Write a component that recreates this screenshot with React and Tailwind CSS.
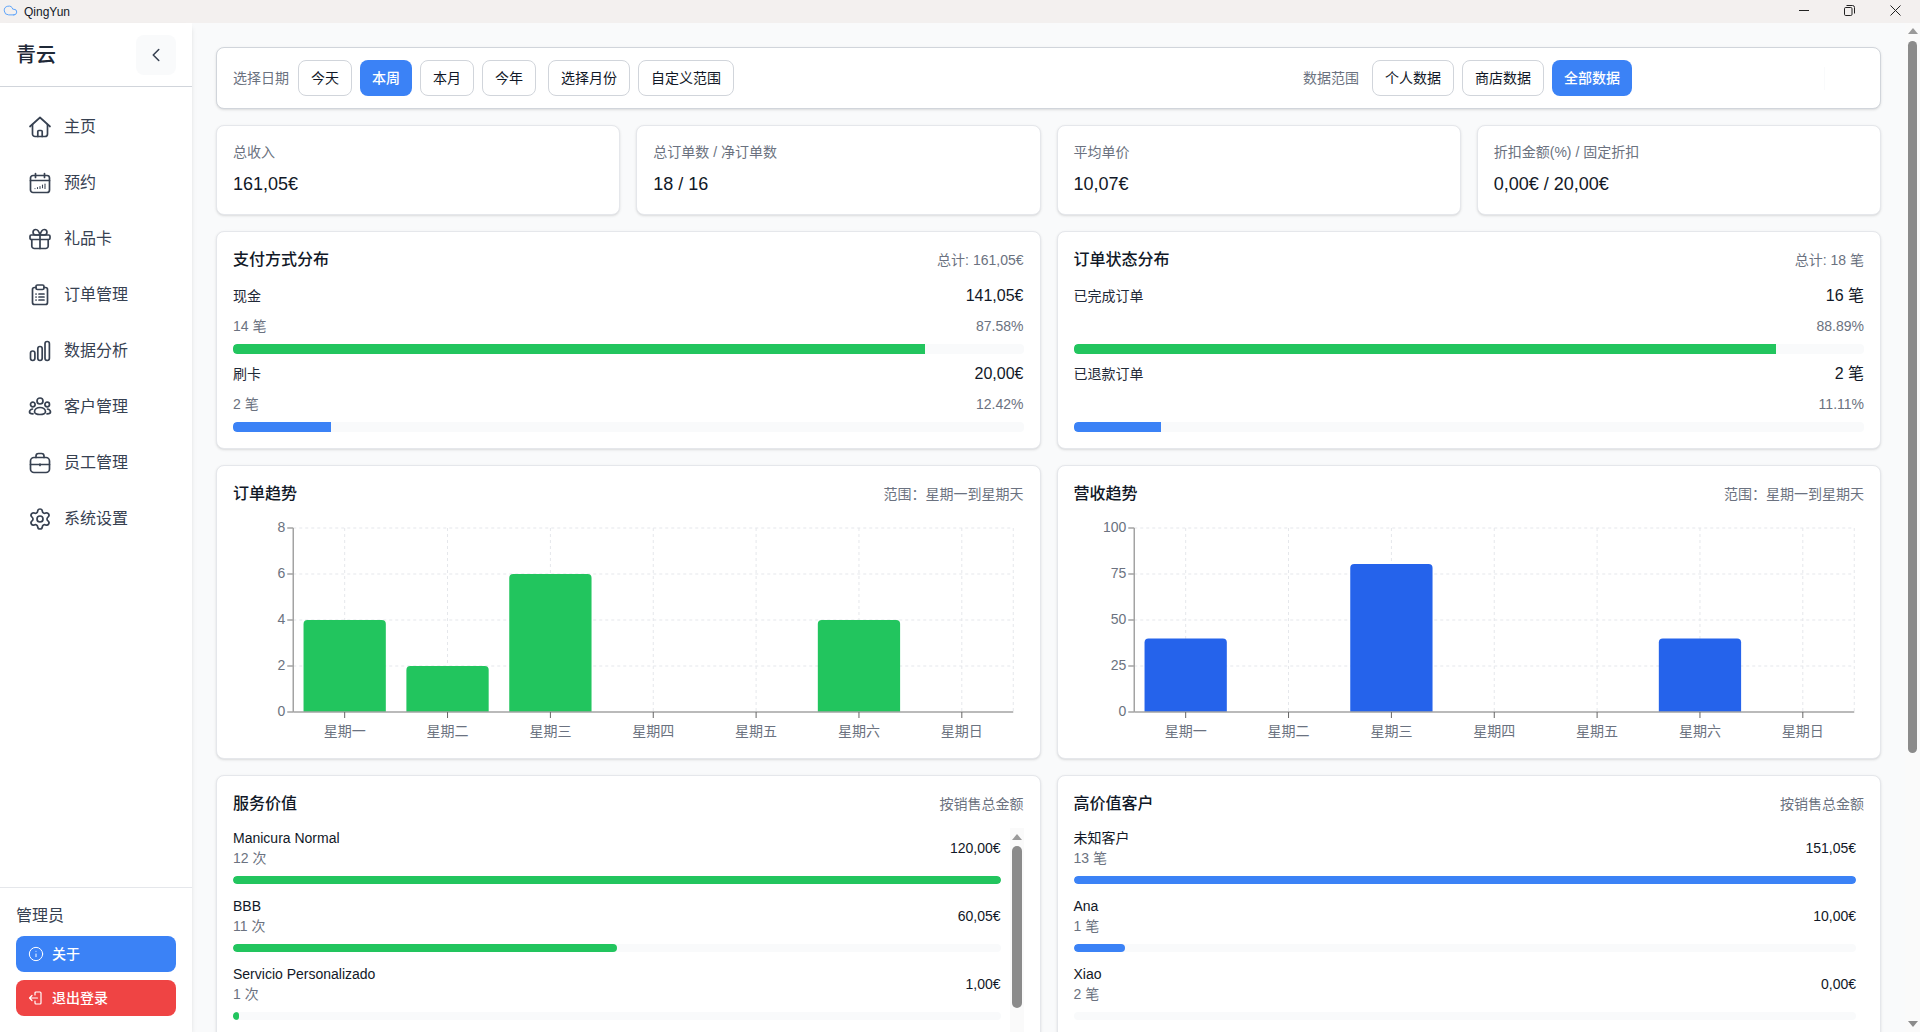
import React from "react";
import { ChevronLeft, Cloud, Info, Settings } from "lucide-react";

const FONT = "font-['Liberation_Sans','Noto_Sans_CJK_SC',sans-serif]";

function Ico({ children, size = 24 }) {
  return (
    <svg width={size} height={size} viewBox="0 0 24 24" fill="none" stroke="currentColor" strokeWidth="1.7" strokeLinecap="round" strokeLinejoin="round" className="shrink-0 text-[#374151]">
      {children}
    </svg>
  );
}

const icons = {
  home: (
    <Ico>
      <path d="M2 11.5 12 2.5l10 9" />
      <path d="M4.5 9.500V19a2.500 2.500 0 0 0 2.500 2.500h10a2.500 2.500 0 0 0 2.500-2.500V9.500" />
      <path d="M9.800 21.500v-5a1 1 0 0 1 1-1h2.400a1 1 0 0 1 1 1v5" />
    </Ico>
  ),
  calendar: (
    <Ico>
      <rect x="2.500" y="4.500" width="19" height="17" rx="2.500" />
      <path d="M2.500 9.500h19M7.500 2.500v4M16.500 2.500v4" />
      <path strokeWidth="1.100" d="M7 17.500v.1M9.500 16.500v1M12 15.500v2M14.500 14v3.500M17 13v4.500" strokeDasharray="1 0.800" />
    </Ico>
  ),
  gift: (
    <Ico>
      <rect x="2" y="8" width="20" height="4.500" rx="1.200" />
      <path d="M3.800 12.500V19a2.500 2.500 0 0 0 2.500 2.500h11.400a2.500 2.500 0 0 0 2.500-2.500v-6.500" />
      <path d="M12 8v13.500" />
      <path d="M12 8S10.500 2.500 7.800 2.500a2.600 2.600 0 0 0 0 5.500H12Zm0 0s1.500-5.500 4.200-5.500a2.600 2.600 0 0 1 0 5.500H12Z" />
    </Ico>
  ),
  clipboard: (
    <Ico>
      <path d="M8 4.500H6.500a2 2 0 0 0-2 2v13a2 2 0 0 0 2 2h11a2 2 0 0 0 2-2v-13a2 2 0 0 0-2-2H16" />
      <rect x="8" y="2" width="8" height="4.500" rx="1.500" />
      <path d="M8 11h.1M11 11h5M8 14h.1M11 14h5M8 17h.1M11 17h5" />
    </Ico>
  ),
  chart: (
    <Ico>
      <rect x="2.500" y="12" width="4.400" height="9.500" rx="2.200" />
      <rect x="9.800" y="7.500" width="4.400" height="14" rx="2.200" />
      <rect x="17" y="2.500" width="4.400" height="19" rx="2.200" />
    </Ico>
  ),
  users: (
    <Ico>
      <circle cx="12" cy="6" r="3" />
      <circle cx="4.800" cy="9.500" r="2.300" />
      <circle cx="19.200" cy="9.500" r="2.300" />
      <path d="M6.500 17c0-2.800 2.500-4.500 5.500-4.500s5.500 1.700 5.500 4.500c0 1-2 2.500-5.500 2.500S6.500 18 6.500 17Z" />
      <path d="M4.500 14C2.500 14.500 1.500 16 1.500 17s1.500 1.800 3.500 1.800M19.500 14c2 .5 3 2 3 3s-1.500 1.800-3.500 1.800" />
    </Ico>
  ),
  briefcase: (
    <Ico>
      <rect x="2.500" y="6.500" width="19" height="15" rx="3.500" />
      <path d="M8 6.500V5a2.500 2.500 0 0 1 2.500-2.500h3A2.500 2.500 0 0 1 16 5v1.500" />
      <path d="M2.500 13.500h19" />
      <path d="M12 13.200v1.200" />
    </Ico>
  ),
  settings: <Settings size={24} strokeWidth={1.7} className="shrink-0 text-[#374151]" />,
};

const nav = [
  ["home", "主页"],
  ["calendar", "预约"],
  ["gift", "礼品卡"],
  ["clipboard", "订单管理"],
  ["chart", "数据分析"],
  ["users", "客户管理"],
  ["briefcase", "员工管理"],
  ["settings", "系统设置"],
];

function TitleBar() {
  return (
    <div className="h-[23px] shrink-0 flex items-center bg-[#f3f0ef] text-[12px] text-[#111827]">
      <Cloud size={15} strokeWidth={1.6} className="ml-[3px] mb-[3px] text-[#60a5fa]" />
      <span className="ml-[6px]">QingYun</span>
      <div className="ml-auto mb-[3px] flex items-center">
        <svg width="11" height="11" viewBox="0 0 11 11" fill="none" stroke="#222" strokeWidth="1" className="mr-[34px]">
          <path d="M0 5.500h10" />
        </svg>
        <svg width="11" height="11" viewBox="0 0 11 11" fill="none" stroke="#222" strokeWidth="1" className="mr-[35px]">
          <rect x="0.500" y="2.500" width="7.500" height="8" rx="1.200" />
          <path d="M2.500 0.500h6a2 2 0 0 1 2 2v6" />
        </svg>
        <svg width="11" height="11" viewBox="0 0 11 11" fill="none" stroke="#222" strokeWidth="1" className="mr-[19px]">
          <path d="M0.500 0.500l10 10M10.500 0.500l-10 10" />
        </svg>
      </div>
    </div>
  );
}

function Sidebar() {
  return (
    <aside className="w-[192px] shrink-0 flex flex-col bg-white shadow-md z-10">
      <div className="h-[64px] shrink-0 flex items-center justify-between px-4 border-b border-[#d1d5db]">
        <span className="text-[20px] font-medium text-[#1f2937]">青云</span>
        <button className="w-10 h-10 flex items-center justify-center rounded-lg bg-[#f9fafb] text-[#374151]">
          <ChevronLeft size={22} strokeWidth={1.7} />
        </button>
      </div>
      <nav className="flex-1 pt-[12px] px-4">
        {nav.map(([k, t]) => (
          <div key={k} className="h-14 flex items-center gap-3 px-3 text-base text-[#374151]">
            {icons[k]}
            <span>{t}</span>
          </div>
        ))}
      </nav>
      <div className="border-t border-[#e5e7eb] p-4">
        <div className="text-base text-[#374151] mb-2">管理员</div>
        <button className="w-full h-9 flex items-center gap-2 px-3 rounded-lg bg-[#3b82f6] text-sm font-medium text-white mb-2">
          <Info size={16} strokeWidth={1.5} />
          关于
        </button>
        <button className="w-full h-9 flex items-center gap-2 px-3 rounded-lg bg-[#ef4444] text-sm font-medium text-white">
          <svg width="16" height="16" viewBox="0 0 16 16" fill="none" stroke="currentColor" strokeWidth="1.200" strokeLinecap="round" strokeLinejoin="round">
            <path d="M7 5V3a1 1 0 0 1 1-1h4a1 1 0 0 1 1 1v10a1 1 0 0 1-1 1H8a1 1 0 0 1-1-1v-2" />
            <path d="M9.500 8H1.500M4 5.500 1.500 8 4 10.500" />
          </svg>
          退出登录
        </button>
      </div>
    </aside>
  );
}

function Btn({ active, children, className = "" }) {
  return active ? (
    <button className={`h-9 px-3 rounded-lg bg-[#3b82f6] text-sm text-white font-medium ${className}`}>{children}</button>
  ) : (
    <button className={`h-9 px-3 rounded-lg border border-[#d1d5db] bg-white text-sm text-[#111827] ${className}`}>{children}</button>
  );
}

function FilterBar() {
  return (
    <div className="flex items-center rounded-lg border border-[#d1d5db] bg-white px-4 py-3 shadow-sm">
      <span className="text-sm text-[#6b7280] mr-[9px]">选择日期</span>
      <div className="flex items-center gap-2">
        <Btn>今天</Btn>
        <Btn active>本周</Btn>
        <Btn>本月</Btn>
        <Btn>今年</Btn>
        <Btn className="ml-1">选择月份</Btn>
        <Btn>自定义范围</Btn>
      </div>
      <div className="ml-auto flex items-center gap-2">
        <span className="text-sm text-[#6b7280] mr-[5px]">数据范围</span>
        <Btn>个人数据</Btn>
        <Btn>商店数据</Btn>
        <Btn active>全部数据</Btn>
      </div>
      <div className="ml-[192px] mr-[39px] h-[23px] w-px bg-[#f9fafb]" />
    </div>
  );
}

function Stat({ title, value }) {
  return (
    <div className="rounded-lg border border-[#e5e7eb] bg-white p-4 shadow-sm">
      <div className="text-sm text-[#6b7280]">{title}</div>
      <div className="mt-2 text-lg text-[#111827]">{value}</div>
    </div>
  );
}

function Card({ title, right, children }) {
  return (
    <div className="rounded-lg border border-[#e5e7eb] bg-white p-4 shadow-sm">
      <div className="flex items-center justify-between mb-3">
        <h3 className="text-base font-medium text-[#111827]">{title}</h3>
        <span className="text-sm text-[#6b7280]">{right}</span>
      </div>
      {children}
    </div>
  );
}

function DistRow({ label, value, sub, pct, color, w }) {
  return (
    <div className="mb-2 last:mb-0">
      <div className="h-6 flex items-center justify-between">
        <span className="text-sm text-[#1f2937]">{label}</span>
        <span className="text-base text-[#111827]">{value}</span>
      </div>
      <div className="mt-2 h-5 flex items-center justify-between text-sm text-[#6b7280]">
        <span>{sub}</span>
        <span>{pct}</span>
      </div>
      <div className="mt-2 h-2.5 rounded bg-[#f9fafb] overflow-hidden">
        <div className={`h-full rounded-l ${color}`} style={{ width: w }} />
      </div>
    </div>
  );
}

const days = ["星期一", "星期二", "星期三", "星期四", "星期五", "星期六", "星期日"];

function Chart({ data, max, ticks, color }) {
  const W = 790;
  const L = 60;
  const R = 780;
  const T = 10;
  const B = 194;
  const band = (R - L) / 7;
  const barW = band * 0.8;
  const yOf = (v) => B - (v / max) * (B - T);
  return (
    <svg width={W} height={224} className="block w-full" viewBox={`0 0 ${W} 224`}>
      <g stroke="#e5e7eb" strokeDasharray="3 3" strokeWidth="1">
        {ticks.slice(1).map((t) => (
          <line key={t} x1={L} x2={R} y1={yOf(t)} y2={yOf(t)} />
        ))}
        {days.map((d, i) => (
          <line key={d} x1={L + band * (i + 0.5)} x2={L + band * (i + 0.5)} y1={T} y2={B} />
        ))}
        <line x1={R} x2={R} y1={T} y2={B} />
      </g>
      {data.map((v, i) => {
        if (!v) return null;
        const x = L + band * i + (band - barW) / 2;
        const y = yOf(v);
        return (
          <path
            key={i}
            fill={color}
            d={`M${x} ${B}V${y + 4}a4 4 0 0 1 4-4H${x + barW - 4}a4 4 0 0 1 4 4V${B}Z`}
          />
        );
      })}
      <g stroke="#a3a3a3" strokeWidth="1.500">
        <line x1={L} x2={L} y1={T} y2={B} />
        <line x1={L} x2={R} y1={B} y2={B} />
        {ticks.map((t) => (
          <line key={t} x1={L - 6} x2={L} y1={yOf(t)} y2={yOf(t)} />
        ))}
      </g>
      <g stroke="#666" strokeWidth="1">
        {days.map((d, i) => (
          <line key={d} x1={L + band * (i + 0.5)} x2={L + band * (i + 0.5)} y1={B} y2={B + 6} />
        ))}
      </g>
      <g fill="#6b7280" fontSize="14">
        {ticks.map((t) => (
          <text key={t} x={L - 8} y={yOf(t) + 4} textAnchor="end">
            {t}
          </text>
        ))}
        {days.map((d, i) => (
          <text key={d} x={L + band * (i + 0.5)} y={218} textAnchor="middle">
            {d}
          </text>
        ))}
      </g>
    </svg>
  );
}

function ListRow({ name, sub, value, color, w }) {
  return (
    <div className="mb-3">
      <div className="flex items-center justify-between">
        <div className="text-sm">
          <div className="text-[#111827]">{name}</div>
          <div className="text-[#6b7280]">{sub}</div>
        </div>
        <span className="text-sm text-[#111827]">{value}</span>
      </div>
      <div className="mt-2 h-2 rounded-full bg-[#f9fafb] overflow-hidden">
        <div className={`h-full rounded-full ${color}`} style={{ width: w }} />
      </div>
    </div>
  );
}

function PageScrollbar() {
  return (
    <div className="relative w-[15px] shrink-0 bg-[#fafafa]">
      <div className="absolute left-[3px] top-[5px] h-0 w-0 border-x-[5px] border-b-[6px] border-x-transparent border-b-[#9a9a9a]" />
      <div className="absolute left-[3px] top-[18px] h-[712px] w-[9px] rounded-full bg-[#8b8b8b]" />
      <div className="absolute bottom-[5px] left-[3px] h-0 w-0 border-x-[5px] border-t-[6px] border-x-transparent border-t-[#8b8b8b]" />
    </div>
  );
}

export default function App() {
  return (
    <div className={`h-screen w-full overflow-hidden flex flex-col bg-[#f9fafb] ${FONT}`}>
      <TitleBar />
      <div className="flex-1 min-h-0 flex">
        <Sidebar />
        <main className="flex-1 min-w-0 overflow-hidden p-6 flex flex-col gap-4">
          <FilterBar />
          <div className="grid grid-cols-4 gap-4">
            <Stat title="总收入" value="161,05€" />
            <Stat title="总订单数 / 净订单数" value="18 / 16" />
            <Stat title="平均单价" value="10,07€" />
            <Stat title="折扣金额(%) / 固定折扣" value="0,00€ / 20,00€" />
          </div>
          <div className="grid grid-cols-2 gap-4">
            <Card title="支付方式分布" right="总计: 161,05€">
              <DistRow label="现金" value="141,05€" sub="14 笔" pct="87.58%" color="bg-[#22c55e]" w="87.58%" />
              <DistRow label="刷卡" value="20,00€" sub="2 笔" pct="12.42%" color="bg-[#3b82f6]" w="12.42%" />
            </Card>
            <Card title="订单状态分布" right="总计: 18 笔">
              <DistRow label="已完成订单" value="16 笔" sub="" pct="88.89%" color="bg-[#22c55e]" w="88.89%" />
              <DistRow label="已退款订单" value="2 笔" sub="" pct="11.11%" color="bg-[#3b82f6]" w="11.11%" />
            </Card>
          </div>
          <div className="grid grid-cols-2 gap-4">
            <Card title="订单趋势" right="范围：星期一到星期天">
              <Chart data={[4, 2, 6, 0, 0, 4, 0]} max={8} ticks={[0, 2, 4, 6, 8]} color="#22c55e" />
            </Card>
            <Card title="营收趋势" right="范围：星期一到星期天">
              <Chart data={[40, 0, 80.5, 0, 0, 40, 0]} max={100} ticks={[0, 25, 50, 75, 100]} color="#2563eb" />
            </Card>
          </div>
          <div className="grid grid-cols-2 gap-4">
            <Card title="服务价值" right="按销售总金额">
              <div className="relative h-64 pr-[23px]">
                <ListRow name="Manicura Normal" sub="12 次" value="120,00€" color="bg-[#22c55e]" w="100%" />
                <ListRow name="BBB" sub="11 次" value="60,05€" color="bg-[#22c55e]" w="50%" />
                <ListRow name="Servicio Personalizado" sub="1 次" value="1,00€" color="bg-[#22c55e]" w="0.83%" />
                <div className="absolute right-0 top-0 h-full w-[14px] bg-[#fafafa]">
                  <div className="absolute left-[2px] top-[6px] h-0 w-0 border-x-[5px] border-b-[6px] border-x-transparent border-b-[#9a9a9a]" />
                  <div className="absolute left-[2px] top-[18px] h-[162px] w-[10px] rounded-full bg-[#8b8b8b]" />
                </div>
              </div>
            </Card>
            <Card title="高价值客户" right="按销售总金额">
              <div className="h-64 pr-2">
                <ListRow name="未知客户" sub="13 笔" value="151,05€" color="bg-[#3b82f6]" w="100%" />
                <ListRow name="Ana" sub="1 笔" value="10,00€" color="bg-[#3b82f6]" w="6.62%" />
                <ListRow name="Xiao" sub="2 笔" value="0,00€" color="bg-[#3b82f6]" w="0%" />
              </div>
            </Card>
          </div>
        </main>
        <PageScrollbar />
      </div>
    </div>
  );
}
